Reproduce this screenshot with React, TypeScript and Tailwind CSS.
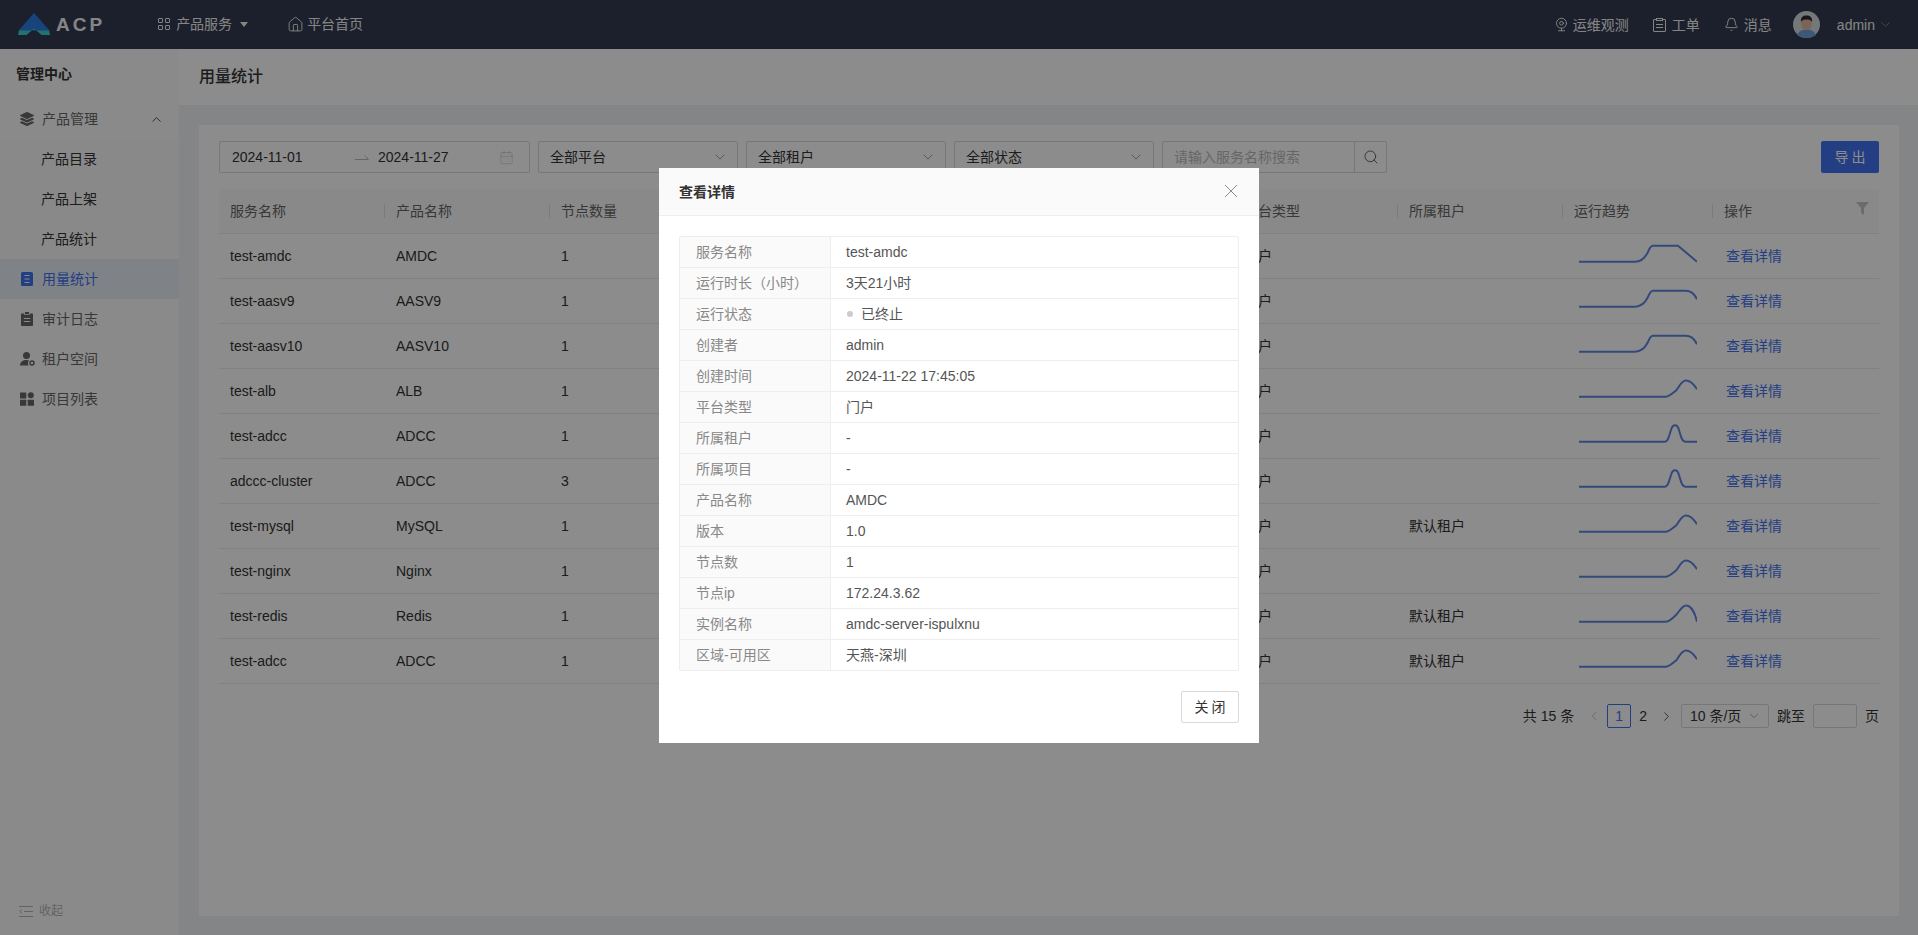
import { Bell, CalendarDays, ChevronDown, ChevronLeft, ChevronRight, ChevronUp, House, Search, Webcam } from "lucide-react";
import { FaLayerGroup } from "react-icons/fa";

const BLUE = "#4272ee";

// sparkline shapes, traced from the table (118 wide, baseline at y=28.7)
const plateauDrop = "M0 28.7H56C62 28.7 66 25 69 19C70.500 15 71.500 12.700 74 12.700H99L118 28.700";
const plateauShort = "M0 28.7H56C62 28.7 66 25 69 19C70.500 15 71.500 12.700 74 12.700H107C112 12.700 116 17 118 21.300";
const spike = "M0 28.7H86C89 28.700 90 23 92 17C93 13.500 94.500 12.300 96 12.300C97.500 12.300 99 13.500 100 17C102 24 103 28.700 107 28.700H118";
const hump = "M0 28.7H87C90 28.700 93 26 97 22.500C100 19.500 102 12.500 107 12.500C111 12.500 115 16.500 118 21.300";
const humpFull = "M0 28.7H87C90 28.700 93 26 97 22C100 19 103 12.500 107 12.500C112 12.500 116 20 118 28.700";

const rows = [
  { name: "test-amdc", product: "AMDC", nodes: 1, tenant: "", line: plateauDrop },
  { name: "test-aasv9", product: "AASV9", nodes: 1, tenant: "", line: plateauShort },
  { name: "test-aasv10", product: "AASV10", nodes: 1, tenant: "", line: plateauShort },
  { name: "test-alb", product: "ALB", nodes: 1, tenant: "", line: hump },
  { name: "test-adcc", product: "ADCC", nodes: 1, tenant: "", line: spike },
  { name: "adccc-cluster", product: "ADCC", nodes: 3, tenant: "", line: spike },
  { name: "test-mysql", product: "MySQL", nodes: 1, tenant: "默认租户", line: hump },
  { name: "test-nginx", product: "Nginx", nodes: 1, tenant: "", line: hump },
  { name: "test-redis", product: "Redis", nodes: 1, tenant: "默认租户", line: humpFull },
  { name: "test-adcc", product: "ADCC", nodes: 1, tenant: "默认租户", line: hump },
];

const details = [
  ["服务名称", "test-amdc"],
  ["运行时长（小时）", "3天21小时"],
  ["运行状态", "已终止"],
  ["创建者", "admin"],
  ["创建时间", "2024-11-22 17:45:05"],
  ["平台类型", "门户"],
  ["所属租户", "-"],
  ["所属项目", "-"],
  ["产品名称", "AMDC"],
  ["版本", "1.0"],
  ["节点数", "1"],
  ["节点ip", "172.24.3.62"],
  ["实例名称", "amdc-server-ispulxnu"],
  ["区域-可用区", "天燕-深圳"],
];

const columns = ["服务名称", "产品名称", "节点数量", "运行时长", "运行状态", "创建时间", "平台类型", "所属租户", "运行趋势", "操作"];
const tableGrid = "grid grid-cols-[166px_165px_170px_170px_170px_173px_165px_165px_150px_166px]";

function Logo() {
  return (
    <svg width="32" height="23" viewBox="0 0 32 23" className="shrink-0">
      <path d="M16 0L31 17H1Z" fill="#2b7de0" />
      <path d="M1 17H31L32 22H23.500L16 15.500L8.500 22H0Z" fill="#3fd0d0" />
      <path d="M1 17H31L30 17.500H2Z" fill="#2b7de0" />
    </svg>
  );
}

function GridIcon() {
  return (
    <svg width="12" height="12" viewBox="0 0 12 12" fill="none" stroke="currentColor">
      <rect x="0.500" y="0.500" width="4" height="4" rx="0.500" />
      <rect x="7.500" y="0.500" width="4" height="4" rx="0.500" />
      <rect x="0.500" y="7.500" width="4" height="4" rx="0.500" />
      <rect x="7.500" y="7.500" width="4" height="4" rx="0.500" />
    </svg>
  );
}

function OrderIcon() {
  return (
    <svg width="13" height="14" viewBox="0 0 13 14" fill="none" stroke="currentColor">
      <rect x="0.500" y="1.500" width="12" height="12" rx="0.500" />
      <rect x="3.500" y="0.500" width="6" height="2" fill="#333a50" />
      <path d="M3 6.500H10M3 9.500H10" />
    </svg>
  );
}

function Avatar() {
  return (
    <svg width="27" height="27" viewBox="0 0 27 27" className="shrink-0">
      <circle cx="13.500" cy="13.500" r="13.500" fill="#d3dade" />
      <path d="M4 24C6 19.500 10 18.500 13.500 18.500C17 18.500 21 19.500 23 24C20.500 26 17 27 13.500 27C10 27 6.500 26 4 24Z" fill="#6fa3dc" />
      <rect x="8.500" y="7" width="10" height="12" rx="4.500" fill="#e0b49c" />
      <path d="M8 11C7.500 6 10 4.500 13.500 4.500C17 4.500 19.500 6 19 11C18 9 16 8.500 13.500 8.500C11 8.500 9 9 8 11Z" fill="#2b2b2b" />
    </svg>
  );
}

function BookIcon() {
  return (
    <svg width="14" height="14" viewBox="0 0 14 14">
      <rect x="1" y="0" width="12" height="14" rx="1.500" fill={BLUE} />
      <path d="M4.500 3.500H9.500M4.500 7H9.500M4.500 10.500H9.500" stroke="#fcfcfc" strokeWidth="1.200" />
    </svg>
  );
}

function ClipIcon() {
  return (
    <svg width="14" height="14" viewBox="0 0 14 14">
      <path d="M2 1.500H4.200V2.800H9.800V1.500H12C12.600 1.500 13 1.900 13 2.500V13C13 13.600 12.600 14 12 14H2C1.400 14 1 13.600 1 13V2.500C1 1.900 1.400 1.500 2 1.500Z" fill="#666" />
      <rect x="5" y="0" width="4" height="2" fill="#666" />
      <path d="M3.800 6.500H10.200M3.800 9.500H10.200" stroke="#fcfcfc" />
    </svg>
  );
}

function TenantIcon() {
  return (
    <svg width="15" height="14" viewBox="0 0 15 14">
      <circle cx="6.500" cy="3.500" r="3.500" fill="#666" />
      <path d="M0 13.500C0 10 3 8 6.500 8C7.500 8 8.500 8.200 9 8.500C8 9.500 7.500 11.500 8.500 13.500Z" fill="#666" />
      <circle cx="12" cy="11" r="2" fill="none" stroke="#666" strokeWidth="1.500" />
    </svg>
  );
}

function TilesIcon() {
  return (
    <svg width="14" height="14" viewBox="0 0 14 14" fill="#666">
      <rect x="0" y="0.500" width="6.300" height="6" rx="0.500" />
      <circle cx="10.800" cy="3.200" r="3" />
      <rect x="0" y="7.700" width="6.300" height="6" rx="0.500" />
      <rect x="7.700" y="7.700" width="6.300" height="6" rx="0.500" />
    </svg>
  );
}

function CollapseIcon() {
  return (
    <svg width="14" height="11" viewBox="0 0 14 11" fill="none" stroke="#b5b5b5">
      <path d="M0 0.500H14M5 5.500H14M0 10.500H14" />
      <path d="M3 3.500L0.800 5.500L3 7.500" />
    </svg>
  );
}

function FunnelIcon() {
  return (
    <svg width="13" height="13" viewBox="0 0 13 13" fill="#c4c4c4" className="mb-[6px] mr-[10px]">
      <path d="M0 0H13L8 6V13L5 11V6Z" />
    </svg>
  );
}

function Spark({ d }: { d: string }) {
  return (
    <svg width="118" height="44" viewBox="0 1 118 44" fill="none">
      <path d={d} stroke="#5f86e0" strokeWidth="2" />
    </svg>
  );
}

function Select({ label }: { label: string }) {
  return (
    <div className="flex w-[200px] items-center justify-between rounded-[2px] border border-[#d9d9d9] bg-white pl-[11px] pr-[9px] text-[#333]">
      <span>{label}</span>
      <ChevronDown className="h-4 w-4 text-[#888]" strokeWidth={1.200} />
    </div>
  );
}

function TopBar() {
  return (
    <header className="flex h-[49px] shrink-0 items-center justify-between bg-[#333a50] pl-[18px] pr-[25px] text-[#f2f2f2]">
      <div className="flex items-center">
        <Logo />
        <span className="ml-[6px] text-[19px] font-bold tracking-[3px]">ACP</span>
        <div className="ml-[53px] flex items-center">
          <GridIcon />
          <span className="ml-[6px]">产品服务</span>
          <svg width="8" height="5" viewBox="0 0 8 5" className="ml-[8px]">
            <path d="M0 0H8L4 5Z" fill="currentColor" />
          </svg>
        </div>
        <div className="ml-[39px] flex items-center">
          <House className="h-[17px] w-[17px]" strokeWidth={1.300} />
          <span className="ml-[3px]">平台首页</span>
        </div>
      </div>
      <div className="flex items-center">
        <Webcam className="h-[15px] w-[15px]" strokeWidth={1.500} />
        <span className="ml-[4px]">运维观测</span>
        <span className="ml-[24px] flex items-center">
          <OrderIcon />
        </span>
        <span className="ml-[6px]">工单</span>
        <Bell className="ml-[24px] h-[15px] w-[15px]" strokeWidth={1.500} />
        <span className="ml-[5px]">消息</span>
        <span className="ml-[21px] flex">
          <Avatar />
        </span>
        <span className="ml-[17px]">admin</span>
        <ChevronDown className="ml-[3px] h-[15px] w-[15px] text-[#999]" strokeWidth={1.200} />
      </div>
    </header>
  );
}

function Sidebar() {
  return (
    <aside className="flex w-[179px] shrink-0 flex-col bg-[#fcfcfc] text-[#666]">
      <div className="flex h-[50px] shrink-0 items-center pl-4 font-semibold text-[#333]">管理中心</div>
      <div className="flex h-10 items-center pl-5 pr-[15px]">
        <FaLayerGroup className="h-[14px] w-[14px]" />
        <span className="ml-2 flex-1">产品管理</span>
        <ChevronUp className="h-[15px] w-[15px] text-[#444]" strokeWidth={1.500} />
      </div>
      <div className="bg-[#f9f9f9] text-[#333]">
        <div className="flex h-10 items-center pl-[41px]">产品目录</div>
        <div className="flex h-10 items-center pl-[41px]">产品上架</div>
        <div className="flex h-10 items-center pl-[41px]">产品统计</div>
      </div>
      <div className="flex h-10 items-center bg-[#e8eef8] pl-5 text-[#4272ee]">
        <BookIcon />
        <span className="ml-2">用量统计</span>
      </div>
      <div className="flex h-10 items-center pl-5">
        <ClipIcon />
        <span className="ml-2">审计日志</span>
      </div>
      <div className="flex h-10 items-center pl-5">
        <TenantIcon />
        <span className="ml-[7px]">租户空间</span>
      </div>
      <div className="flex h-10 items-center pl-5">
        <TilesIcon />
        <span className="ml-2">项目列表</span>
      </div>
      <div className="mt-auto mb-[16px] flex items-center pl-[19px] text-xs text-[#b5b5b5]">
        <CollapseIcon />
        <span className="ml-[6px]">收起</span>
      </div>
    </aside>
  );
}

function DetailModal() {
  return (
    <div className="fixed inset-0 z-20 flex justify-center pt-[168px]">
      <div className="h-[575px] w-[600px] bg-white text-[#555]">
        <div className="flex h-[48px] items-center justify-between border-b border-[#eee] bg-[#fafafa] pl-5 pr-[22px]">
          <span className="font-semibold text-[#333]">查看详情</span>
          <svg width="12" height="12" viewBox="0 0 12 12" stroke="#8c8c8c" className="mb-[1px]">
            <path d="M0 0L12 12M12 0L0 12" />
          </svg>
        </div>
        <div className="px-5 pt-5">
          <div className="rounded-[2px] border border-[#eee]">
            {details.map(([k, v]) => (
              <div key={k} className="grid h-[31px] grid-cols-[151px_1fr] border-b border-[#eee] last:h-[30px] last:border-b-0">
                <div className="flex items-center border-r border-[#eee] bg-[#fafafa] pl-4 text-[#888]">{k}</div>
                <div className="flex items-center pl-[15px]">
                  {k === "运行状态" && <span className="ml-[1px] mr-[8px] h-[6px] w-[6px] rounded-full bg-[#ccc]" />}
                  {v}
                </div>
              </div>
            ))}
          </div>
          <div className="mt-5 flex justify-end">
            <button className="h-8 w-[58px] rounded-[2px] border border-[#d9d9d9] bg-white pl-[3px] tracking-[3px] text-[#333]">关闭</button>
          </div>
        </div>
      </div>
    </div>
  );
}

export default function App() {
  return (
    <div className="flex h-screen flex-col overflow-hidden bg-white text-sm text-[#333] [font-family:'Liberation_Sans','Noto_Sans_CJK_SC',sans-serif]">
      <TopBar />
      <div className="flex min-h-0 flex-1">
        <Sidebar />
        <main className="flex min-w-0 flex-1 flex-col bg-[#f0f2f5]">
          <div className="flex h-[56px] shrink-0 items-center bg-white pb-[1px] pl-5 text-base font-medium text-[#333]">用量统计</div>
          <div className="flex min-h-0 flex-1 pb-[19px] pl-5 pr-[19px] pt-5">
            <section className="min-w-0 flex-1 bg-white px-5 pt-4">
              {/* filters */}
              <div className="flex h-8 gap-2">
                <div className="flex w-[311px] items-center rounded-[2px] border border-[#d9d9d9] pl-3 pr-[15px]">
                  <span className="w-[123px]">2024-11-01</span>
                  <svg width="14" height="5" viewBox="0 0 14 5" fill="none" stroke="#bbb" className="mr-[9px] mt-[1px]">
                    <path d="M0 4.500H13.500L9.500 0.500" />
                  </svg>
                  <span className="flex-1">2024-11-27</span>
                  <CalendarDays className="h-[15px] w-[15px] text-[#ccc]" strokeWidth={1.200} />
                </div>
                <Select label="全部平台" />
                <Select label="全部租户" />
                <Select label="全部状态" />
                <div className="flex w-[225px] rounded-[2px] border border-[#d9d9d9]">
                  <input className="min-w-0 flex-1 pl-[11px] outline-none placeholder:text-[#bbb]" placeholder="请输入服务名称搜索" />
                  <span className="flex w-[32px] items-center justify-center border-l border-[#d9d9d9]">
                    <Search className="h-[16px] w-[16px] text-[#666]" strokeWidth={1.500} />
                  </span>
                </div>
                <button className="ml-auto w-[58px] rounded-[2px] bg-[#4272ee] pl-[3px] tracking-[3px] text-white">导出</button>
              </div>

              {/* table */}
              <div className="mt-4">
                <div className={`${tableGrid} h-[45px] border-b border-[#ececec] bg-[#fafafa] text-[#666]`}>
                  {columns.map((c, i) => (
                    <div key={c} className="flex items-center justify-between pl-[11px]">
                      <span>{c}</span>
                      {i === 9 ? <FunnelIcon /> : <span className="h-[14px] w-px bg-[#e0e0e0]" />}
                    </div>
                  ))}
                </div>
                {rows.map((r, i) => (
                  <div key={i} className={`${tableGrid} h-[45px] items-center border-b border-[#ececec]`}>
                    <span className="pl-[11px]">{r.name}</span>
                    <span className="pl-[11px]">{r.product}</span>
                    <span className="pl-[11px]">{r.nodes}</span>
                    <span />
                    <span />
                    <span />
                    <span className="pl-[11px]">门户</span>
                    <span className="pl-[11px]">{r.tenant}</span>
                    <span className="flex pl-[16px]">
                      <Spark d={r.line} />
                    </span>
                    <span className="pl-[13px] text-[#4272ee]">查看详情</span>
                  </div>
                ))}
              </div>

              {/* pagination */}
              <div className="mt-5 flex h-6 items-center justify-end">
                <span>共 15 条</span>
                <ChevronLeft className="ml-[13px] h-[14px] w-[14px] text-[#bbb]" strokeWidth={1.500} />
                <span className="ml-[6px] flex h-6 w-6 items-center justify-center rounded-[2px] border border-[#4272ee] text-[#4272ee]">1</span>
                <span className="ml-[8px]">2</span>
                <ChevronRight className="ml-[12px] h-[15px] w-[15px] text-[#555]" strokeWidth={1.500} />
                <div className="ml-[7px] flex h-6 w-[88px] items-center justify-between rounded-[2px] border border-[#d9d9d9] pl-[8px] pr-[7px]">
                  <span>10 条/页</span>
                  <ChevronDown className="h-[14px] w-[14px] text-[#888]" strokeWidth={1.200} />
                </div>
                <span className="ml-2">跳至</span>
                <span className="ml-2 h-6 w-[44px] rounded-[2px] border border-[#d9d9d9]" />
                <span className="ml-2">页</span>
              </div>
            </section>
          </div>
        </main>
      </div>
      {/* antd-style modal mask */}
      <div className="fixed inset-0 z-10 bg-black/45" />
      <DetailModal />
    </div>
  );
}
